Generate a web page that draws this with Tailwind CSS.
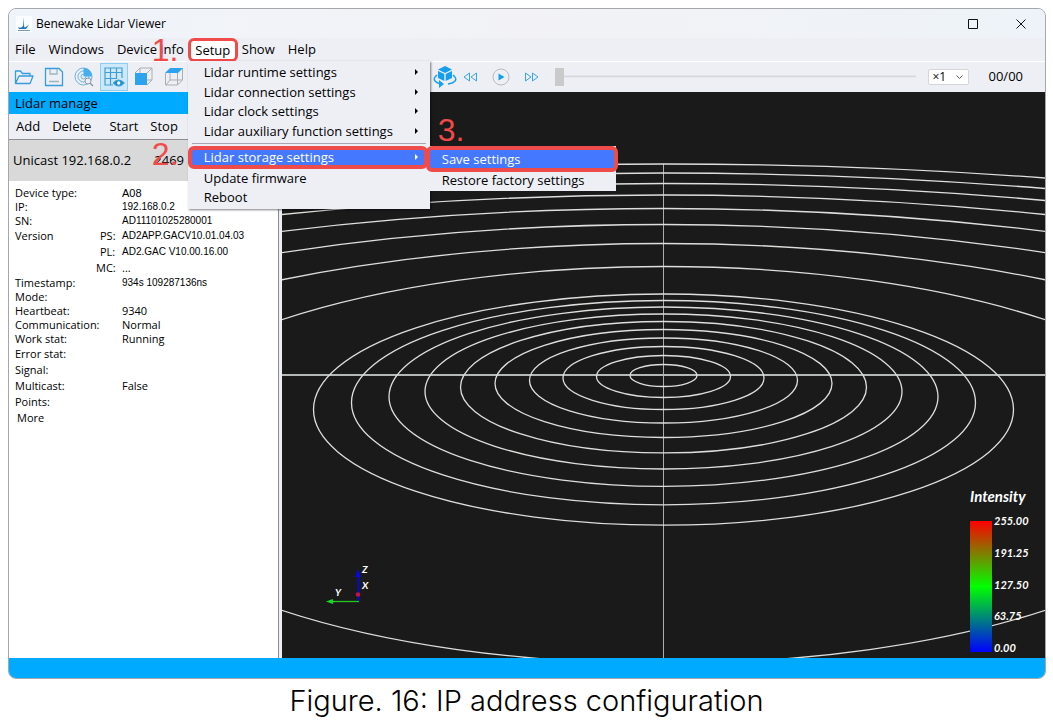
<!DOCTYPE html>
<html lang="en">
<head>
<meta charset="utf-8">
<title>Benewake Lidar Viewer</title>
<script src="https://cdn.jsdelivr.net/npm/@tailwindcss/browser@4"></script>
</head>
<body class="flex min-h-screen flex-col bg-white text-black font-['Open_Sans',sans-serif]">
<main class="relative ml-2 mr-[7px] mt-2 flex h-[671px] flex-col overflow-hidden rounded-lg border border-[#a5a7ab] bg-[#eeeff5]">

  <header class="flex h-[29px] shrink-0 items-center bg-linear-to-r from-[#eff4fa] via-[#f2f2f6] to-[#edf3f8] pl-[7px] text-xs">
    <svg class="mr-1 h-4 w-4" viewBox="0 0 16 16" aria-hidden="true"><rect width="16" height="16" fill="#fafcfe"/><path d="M7 1l1 9 1 2H7z" fill="#1883d5"/><path d="M2 11q3 2 5-1l1 2 5-3-3 4H3z" fill="#2474b8"/><path d="M2 14.500h12" stroke="#7d98b2"/></svg>
    <h1>Benewake Lidar Viewer</h1>
    <button class="ml-auto flex h-7 w-12 items-center justify-center" aria-label="Maximize"><svg class="h-[10px] w-[10px]" viewBox="0 0 10 10"><path d="M.5.500h9v9h-9z" fill="none" stroke="#111"/></svg></button>
    <button class="flex h-7 w-12 items-center justify-center" aria-label="Close"><svg class="h-[10px] w-[10px]" viewBox="0 0 10 10"><path d="M.5.500l9 9m0-9l-9 9" fill="none" stroke="#111"/></svg></button>
  </header>

  <nav class="flex h-6 shrink-0 items-center border-b border-white pl-1.5 text-[13px]">
    <button class="mr-[13px]">File</button>
    <button class="mr-[13px]">Windows</button>
    <button class="mr-1">Device info</button>
    <div class="relative">
      <button class="block h-6 w-[50px] rounded-md border-[3px] border-[#f04b4b] bg-white leading-4">Setup</button>
      <span class="pointer-events-none absolute -left-9 -top-1 z-30 font-['Liberation_Sans'] text-[32px] leading-8 text-[#f04b4b]">1.</span>

      <div class="absolute left-0 top-[23px] z-20 flex w-[242px] flex-col bg-[#eeeff5] pb-0.5 pt-0.5 shadow-[1px_1px_2px_rgba(0,0,0,0.5)]">
        <button class="flex h-[19px] items-center justify-between pl-4 pr-3 leading-4"><span>Lidar runtime settings</span><svg class="h-[6px] w-[3px]" viewBox="0 0 3 6"><path d="M0 0l3 3-3 3z"/></svg></button>
        <button class="flex h-5 items-center justify-between pl-4 pr-3 leading-4"><span>Lidar connection settings</span><svg class="h-[6px] w-[3px]" viewBox="0 0 3 6"><path d="M0 0l3 3-3 3z"/></svg></button>
        <button class="flex h-[19px] items-center justify-between pl-4 pr-3 leading-4"><span>Lidar clock settings</span><svg class="h-[6px] w-[3px]" viewBox="0 0 3 6"><path d="M0 0l3 3-3 3z"/></svg></button>
        <button class="flex h-5 items-center justify-between pl-4 pr-3 leading-4"><span>Lidar auxiliary function settings</span><svg class="h-[6px] w-[3px]" viewBox="0 0 3 6"><path d="M0 0l3 3-3 3z"/></svg></button>
        <hr class="mx-1 mt-0.5 mb-px border-[#aaa4b4]">
        <div class="relative mt-px">
          <button class="flex h-[23px] w-[240px] items-center justify-between rounded-md border-4 border-[#f04b4b] bg-[#4479ff] pl-3 pr-1.5 leading-4 text-white"><span>Lidar storage settings</span><svg class="h-[6px] w-[3px]" viewBox="0 0 3 6"><path d="M0 0l3 3-3 3z" fill="#fff"/></svg></button>
          <span class="pointer-events-none absolute -left-9 -top-2 font-['Liberation_Sans'] text-[32px] leading-8 text-[#f04b4b]">2.</span>
          <div class="absolute left-full top-0 z-10 flex w-[186px] flex-col bg-[#eeeff5] pb-0.5">
            <button class="-ml-1 -mr-0.5 h-[26px] rounded-md border-4 border-[#f04b4b] bg-[#4479ff] pl-3 text-left leading-4 text-white">Save settings</button>
            <button class="h-[17px] pl-3 text-left leading-4">Restore factory settings</button>
            <span class="pointer-events-none absolute -top-8 left-2 font-['Liberation_Sans'] text-[32px] leading-8 text-[#f04b4b]">3.</span>
          </div>
        </div>
        <button class="h-[19px] pl-4 text-left leading-4">Update firmware</button>
        <button class="h-[19px] pl-4 text-left leading-4">Reboot</button>
      </div>
    </div>
    <button class="ml-1 mr-[13px]">Show</button>
    <button>Help</button>
  </nav>

  <div class="flex h-[30px] shrink-0 items-center pl-[3px]">
    <div class="flex w-[421px] shrink-0 items-center">
      <button class="flex h-7 w-6 items-center justify-center" aria-label="Open"><svg class="h-5 w-5" viewBox="0 0 20 20" fill="none" stroke="#359ddf" stroke-width="1.300" stroke-linejoin="round"><path d="M1.500 16.500V4h5l2 2.500H16V9M1.500 16.500L5 9h14l-3 7.500z"/></svg></button>
      <button class="ml-1.5 flex h-7 w-6 items-center justify-center" aria-label="Save"><svg class="h-5 w-5" viewBox="0 0 20 20" fill="none" stroke="#359ddf" stroke-width="1.300"><path d="M1.500 1.500H15L18.500 5v13.500h-17z"/><path d="M6 2v5h7V2M5 14.500h10" stroke="#9fb4c2"/></svg></button>
      <button class="ml-1.5 flex h-7 w-6 items-center justify-center" aria-label="Search network"><svg class="h-5 w-5" viewBox="0 0 20 20" fill="none" stroke="#6ab1dc"><circle cx="9.500" cy="9.500" r="8.500"/><circle cx="9.500" cy="9.500" r="5.500"/><circle cx="9.500" cy="9.500" r="2.500"/><path d="M9.500 1a8.500 8.500 0 0 1 8.500 8.500H9.500z" fill="#42aff0" stroke="none"/><circle cx="14" cy="14" r="3" fill="#eeeff5" stroke="#8b9aa5"/><path d="M16 16l3 3" stroke="#8b9aa5" stroke-width="1.500"/></svg></button>
      <button class="ml-1 flex h-7 w-7 items-center justify-center border border-[#8fcdf3] bg-[#cce8fa]" aria-label="Grid view"><svg class="h-[22px] w-[22px]" viewBox="0 0 22 22" fill="none" stroke="#3f9fd4" stroke-width="1.200"><path d="M10 19H2V2h17v10M2 6.500h17M2 12.500h11M7.500 2v17M13.500 2v11"/><path d="M10.500 17q5-6 10.500 0-5.500 6-10.500 0z" fill="#168bce"/><circle cx="15.700" cy="17" r="1.700" fill="#fff" stroke="none"/></svg></button>
      <button class="ml-1 flex h-7 w-6 items-center justify-center" aria-label="Front view"><svg class="h-5 w-5" viewBox="0 0 20 20" fill="none" stroke="#a9aeb3"><path d="M6 6V1h12v12h-5M6 1L1 6m17-5l-5 5m5 7l-5 5"/><path d="M1 6h12v12H1z" fill="#2da3ef" stroke="none"/></svg></button>
      <button class="ml-1.5 flex h-7 w-6 items-center justify-center" aria-label="Top view"><svg class="h-5 w-5" viewBox="0 0 20 20" fill="none" stroke="#a9aeb3"><path d="M1.500 6v12h12V6M18.500 1v12l-5 5M6 6v7h12M6 13l-4 5"/><path d="M6 1h13l-5 5H1z" fill="#2da3ef" stroke="none"/></svg></button>
    </div>
    <button aria-label="Rotate view"><svg class="h-[22px] w-6" viewBox="0 0 24 22"><path d="M12 0l7 3.500-7 3.500-7-3.500zM5 5l6.300 3v7L5 12zM19 5l-6.300 3v7L19 12z" fill="#149ff1"/><path d="M4 9q-6 5 1 8l4 1M20 9q6 5-1 8l-4 1" fill="none" stroke="#149ff1" stroke-width="1.500"/><path d="M6 14l5 4-5 4z" fill="#149ff1"/></svg></button>
    <button class="ml-1.5" aria-label="Rewind"><svg class="h-[10px] w-[15px]" viewBox="0 0 15 10" fill="none" stroke="#36a5e8"><path d="M6.500 1v8L1 5zM13.500 1v8L8 5z"/></svg></button>
    <button class="ml-[14px]" aria-label="Play"><svg class="h-[18px] w-[18px]" viewBox="0 0 18 18"><circle cx="9" cy="9" r="8" fill="none" stroke="#b6bbc0"/><path d="M6.500 5.500L12.500 9l-6 3.500z" fill="#149fef"/></svg></button>
    <button class="ml-[14px]" aria-label="Fast forward"><svg class="h-[10px] w-[15px]" viewBox="0 0 15 10" fill="none" stroke="#36a5e8"><path d="M1.500 1v8L7 5zM8.500 1v8L14 5z"/></svg></button>
    <input type="range" min="0" max="100" value="0" aria-label="Playback position" class="ml-4 h-[18px] min-w-0 flex-1 appearance-none bg-linear-to-b from-transparent from-40% via-[#d0d0d2] via-45% to-transparent to-55% [&::-webkit-slider-thumb]:h-[18px] [&::-webkit-slider-thumb]:w-[9px] [&::-webkit-slider-thumb]:appearance-none [&::-webkit-slider-thumb]:bg-[#cacaca]">
    <div class="relative ml-3 flex items-center">
      <select aria-label="Playback speed" class="h-4 w-[41px] appearance-none rounded-xs border border-[#d5d5d8] bg-white pl-1 text-xs leading-3"><option>×1</option></select>
      <svg class="pointer-events-none absolute right-1.5 h-1 w-[7px]" viewBox="0 0 7 4"><path d="M.5.500l3 3 3-3" fill="none" stroke="#555"/></svg>
    </div>
    <output class="ml-5 mr-[22px] text-[13px]">00/00</output>
  </div>

  <div class="flex min-h-0 flex-1">
    <aside class="mr-[3px] flex w-[270px] shrink-0 flex-col">
      <h2 class="h-[22px] bg-[#00aaff] pl-1.5 text-[13px] leading-[22px]">Lidar manage</h2>
      <div class="flex h-[26px] items-center border-b border-[#8d8d96] pl-[7px] text-[13px]">
        <button class="mr-3">Add</button><button class="mr-[18px]">Delete</button><button class="mr-3">Start</button><button>Stop</button>
      </div>
      <section class="flex-1 border-r border-[#8d8d96] bg-white text-[11px]">
        <div class="mb-[5px] flex h-[41px] items-center justify-between bg-[#d9d9d9] pl-1 pr-[94px] text-[13px]"><span>Unicast 192.168.0.2</span><span>2469</span></div>
        <table class="w-full table-fixed border-collapse text-left">
          <colgroup><col class="w-[83px]"><col class="w-[30px]"><col></colgroup>
          <tbody class="[&_td]:p-0 [&_th]:p-0 [&_th]:pl-1.5 [&_th]:font-normal [&_th]:whitespace-nowrap [&_td]:whitespace-nowrap">
            <tr class="h-3.5 leading-[14px]"><th>Device type:</th><td></td><td class="font-['Liberation_Sans']">A08</td></tr>
            <tr class="h-3.5 leading-[14px]"><th>IP:</th><td></td><td class="font-['Liberation_Sans'] text-[10px]">192.168.0.2</td></tr>
            <tr class="h-3.5 leading-[14px]"><th>SN:</th><td></td><td class="font-['Liberation_Sans'] text-[10px]">AD11101025280001</td></tr>
            <tr class="h-4 leading-4"><th>Version</th><td class="pl-2!">PS:</td><td class="font-['Liberation_Sans'] text-[10px]">AD2APP.GACV10.01.04.03</td></tr>
            <tr class="h-4 leading-4"><th></th><td class="pl-2!">PL:</td><td class="font-['Liberation_Sans'] text-[10px]">AD2.GAC V10.00.16.00</td></tr>
            <tr class="h-4 leading-4"><th></th><td class="pl-1!">MC:</td><td>...</td></tr>
            <tr class="h-3.5 leading-[14px]"><th>Timestamp:</th><td></td><td class="font-['Liberation_Sans'] text-[10px]">934s 109287136ns</td></tr>
            <tr class="h-3.5 leading-[14px]"><th>Mode:</th><td></td><td></td></tr>
            <tr class="h-3.5 leading-[14px]"><th>Heartbeat:</th><td></td><td>9340</td></tr>
            <tr class="h-3.5 leading-[14px]"><th>Communication:</th><td></td><td>Normal</td></tr>
            <tr class="h-3.5 leading-[14px]"><th>Work stat:</th><td></td><td>Running</td></tr>
            <tr class="h-4 leading-4"><th>Error stat:</th><td></td><td></td></tr>
            <tr class="h-4 leading-4"><th>Signal:</th><td></td><td></td></tr>
            <tr class="h-4 leading-4"><th>Multicast:</th><td></td><td>False</td></tr>
            <tr class="h-4 leading-4"><th>Points:</th><td></td><td></td></tr>
          </tbody>
        </table>
        <button class="ml-2 block h-4 leading-4">More</button>
      </section>
    </aside>

    <section class="relative min-w-0 flex-1 bg-[#1a1a1a]">
      <svg class="absolute inset-0 h-full w-full" viewBox="282 92 763 566" preserveAspectRatio="xMidYMid slice" fill="none" stroke="#dedfdc" stroke-width="1.300" aria-label="Range rings">
        <path d="M663.500 164v494" stroke="#a9adac" stroke-width="1"/><path d="M282 375h763" stroke="#b4b8b6" stroke-width="2"/>
        <ellipse cx="663.500" cy="375.500" rx="33.500" ry="11"/>
        <ellipse cx="663.500" cy="376.500" rx="67" ry="21"/>
        <ellipse cx="663.500" cy="378" rx="100.500" ry="31.500"/>
        <ellipse cx="663.500" cy="380.500" rx="134" ry="42.500"/>
        <ellipse cx="663.500" cy="383.500" rx="168.500" ry="54"/>
        <ellipse cx="663.500" cy="387.200" rx="203" ry="65.700"/>
        <ellipse cx="663.500" cy="391.500" rx="238.500" ry="77.500"/>
        <ellipse cx="663.500" cy="396.700" rx="274.500" ry="89.700"/>
        <ellipse cx="663.500" cy="402.700" rx="312" ry="102.200"/>
        <ellipse cx="663.500" cy="409.600" rx="350" ry="115.600"/>
        <ellipse cx="663.500" cy="465" rx="560" ry="198.500"/>
        <ellipse cx="663.500" cy="567" rx="829" ry="323.500"/>
        <ellipse cx="663.500" cy="805.500" rx="1242" ry="581"/>
        <ellipse cx="663.500" cy="1697.500" rx="2177" ry="1489"/>
        <path d="M282 214.500Q663.500 175.500 1045 214.500M282 200.500Q663.500 166.500 1045 200.500M282 188.500Q663.500 157.500 1045 188.500M282 178Q663.500 150 1045 178"/>
        <path d="M358.500 602V575" stroke="#0909c8" stroke-width="2"/><path d="M358 569l3 8h-6z" fill="#0909d8" stroke="none"/>
        <path d="M359 601.500H332" stroke="#22c922"/><path d="M326 601.500l7-2.500v5z" fill="#14dc22" stroke="none"/>
        <circle cx="358" cy="594.500" r="2.300" fill="#c31247" stroke="none"/>
        <g fill="#fff" stroke="none" font-family="Lato,sans-serif" font-size="10" font-style="italic" font-weight="700"><text x="362" y="573">Z</text><text x="362" y="589">X</text><text x="335" y="596">Y</text></g>
      </svg>
      <figure class="absolute bottom-[6px] right-[11px] w-[64px] font-['Lato',sans-serif] italic text-white">
        <figcaption class="mb-2.5 text-[15px] leading-5 font-bold">Intensity</figcaption>
        <div class="flex h-[136px] items-end gap-0.5">
          <div class="h-[131px] w-[22px] shrink-0 bg-linear-to-b/srgb from-[#ff0000] via-[#00ff00] to-[#0000ff]"></div>
          <ul class="flex h-full flex-col justify-between text-[11px] leading-[9px] font-bold"><li>255.00</li><li>191.25</li><li>127.50</li><li>63.75</li><li>0.00</li></ul>
        </div>
      </figure>
    </section>
  </div>
  <footer class="h-5 shrink-0 bg-[#00aaff]"></footer>
</main>
<p class="pt-1 text-center font-['Inter',sans-serif] text-[29px] leading-9 font-light">Figure. 16: IP address configuration</p>
</body>
</html>
